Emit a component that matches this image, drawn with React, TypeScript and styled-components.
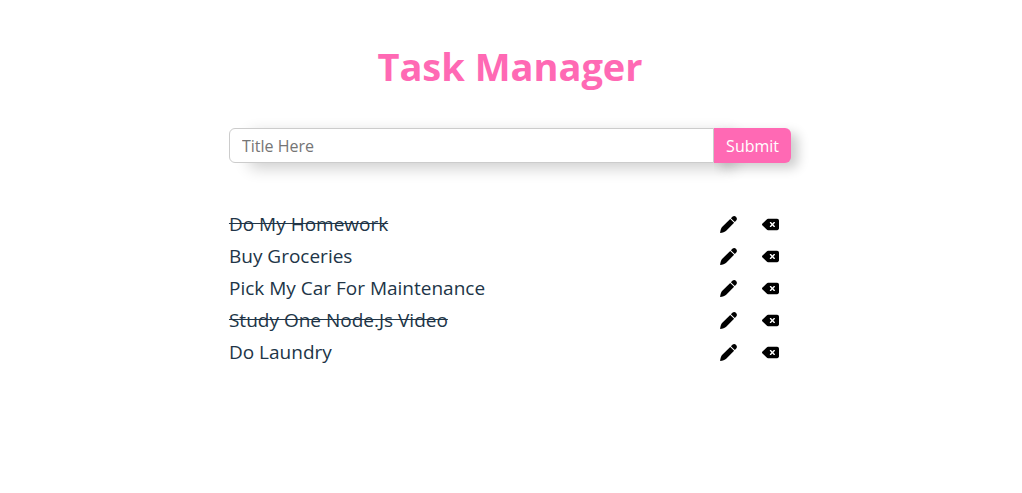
import React, { useState } from "react";
import styled, { createGlobalStyle } from "styled-components";
import { FaDeleteLeft } from "react-icons/fa6";

const GlobalStyle = createGlobalStyle`
  *, *::before, *::after { box-sizing: border-box; }
  body {
    margin: 0;
    padding-right: 2px;
    background: #fff;
    color: #213547;
    font-family: "Segoe UI", "Open Sans", "Noto Sans", sans-serif;
  }
`;

const Page = styled.main`
  width: 55vw;
  min-width: 300px;
  margin: 0 auto;
  padding-top: 40px;
`;

const Title = styled.h1`
  margin: 0 0 36px;
  color: #ff69b4;
  font-size: 38px;
  line-height: 52px;
  text-align: center;
`;

const Form = styled.form`
  display: flex;
  height: 35px;
`;

const TitleInput = styled.input`
  flex: 1;
  min-width: 0;
  padding: 0 12px;
  border: 1px solid #ccc;
  border-radius: 6px 0 0 6px;
  outline: none;
  background: #fff;
  font: 16px "Segoe UI", "Open Sans", "Noto Sans", sans-serif;
  box-shadow: 20px 5px 16px rgba(0, 0, 0, 0.2);
  &::placeholder { color: #757575; opacity: 1; }
`;

const SubmitButton = styled.button`
  padding: 0 12px;
  border: 0;
  border-radius: 0 6px 6px 0;
  background: #ff69b4;
  color: #fff;
  font: 16px "Segoe UI", "Open Sans", "Noto Sans", sans-serif;
  box-shadow: 7px 5px 12px rgba(0, 0, 0, 0.2);
  clip-path: inset(-40px -40px -40px 0);
  cursor: pointer;
`;

const TaskList = styled.ul`
  margin: 45px 0 0;
  padding: 0;
  list-style: none;
`;

const TaskRow = styled.li`
  display: flex;
  align-items: center;
  height: 32px;
`;

const TaskTitle = styled.span<{ $done: boolean }>`
  flex: 1;
  font-size: 19px;
  text-decoration: ${(p) => (p.$done ? "line-through" : "none")};
`;

const Actions = styled.div`
  display: flex;
  align-items: center;
  gap: 25px;
  padding-right: 12px;
`;

const IconButton = styled.button`
  display: flex;
  padding: 0;
  border: 0;
  background: none;
  color: #000;
  font-size: 17px;
  cursor: pointer;
`;

const PencilIcon = () => (
  <svg width="1em" height="1em" viewBox="0 0 17 17" fill="currentColor" aria-hidden="true">
    <path d="M10.2 2.9 14.1 6.8 6.2 14.7C5 15.9 2.6 16.6.1 16.9.4 14.4 1.1 12 2.3 10.8Z" />
    <path d="M10.9 2.2 12.4.8C13.5-.2 15.1-.1 16.1.9 17.1 1.9 17.2 3.5 16.2 4.6L14.8 6.1Z" />
  </svg>
);

const tasks = [
  { title: "Do My Homework", done: true },
  { title: "Buy Groceries", done: false },
  { title: "Pick My Car For Maintenance", done: false },
  { title: "Study One Node.Js Video", done: true },
  { title: "Do Laundry", done: false },
];

export default function App() {
  const [title, setTitle] = useState("");
  return (
    <>
      <GlobalStyle />
      <Page>
        <Title>Task Manager</Title>
        <Form onSubmit={(e: React.FormEvent) => e.preventDefault()}>
          <TitleInput
            aria-label="Task title"
            placeholder="Title Here"
            value={title}
            onChange={(e: React.ChangeEvent<HTMLInputElement>) => setTitle(e.target.value)}
          />
          <SubmitButton type="submit">Submit</SubmitButton>
        </Form>
        <TaskList>
          {tasks.map((task) => (
            <TaskRow key={task.title}>
              <TaskTitle $done={task.done}>{task.title}</TaskTitle>
              <Actions>
                <IconButton type="button" aria-label={`Edit ${task.title}`}>
                  <PencilIcon />
                </IconButton>
                <IconButton type="button" aria-label={`Delete ${task.title}`}>
                  <FaDeleteLeft />
                </IconButton>
              </Actions>
            </TaskRow>
          ))}
        </TaskList>
      </Page>
    </>
  );
}
